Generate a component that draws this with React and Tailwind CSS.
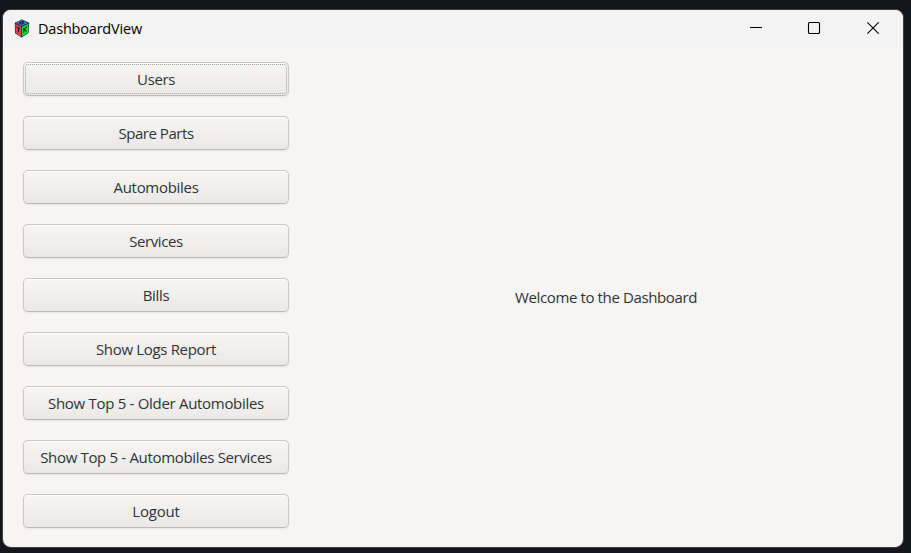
const items = [
  { label: 'Users', focused: true, spacing: 'tracking-[-0.4px]' },
  { label: 'Spare Parts', spacing: 'tracking-[-0.45px]' },
  { label: 'Automobiles', spacing: 'tracking-[-0.3px]' },
  { label: 'Services', spacing: 'tracking-[-0.4px]' },
  { label: 'Bills', spacing: 'tracking-[-0.3px]' },
  { label: 'Show Logs Report', spacing: 'tracking-[-0.33px]' },
  { label: 'Show Top 5 - Older Automobiles', spacing: 'tracking-[-0.3px]' },
  { label: 'Show Top 5 - Automobiles Services', spacing: 'tracking-[-0.33px]' },
  { label: 'Logout', spacing: 'tracking-[-0.2px]' },
];

function GtkLogo() {
  return (
    <svg width="16" height="19" viewBox="0 0 16 19" className="shrink-0">
      <path d="M8 .4 15.2 3.8 14.5 14 7.7 18.5 1 14.2.8 3.8Z" fill="#24262c" />
      <path d="M8 1 14.3 3.9 7.5 7.1 1.5 4.1Z" fill="#3a6fcc" />
      <path d="M1.4 5 7.2 7.8v9.6L1.7 13.9Z" fill="#f23c40" />
      <path d="M8 7.8l6.6-3-.6 8.9L8 17.4Z" fill="#16d535" />
      <path d="M10 3 7.6 2.6 5.4 4 7.6 5.2 9.6 4.2 8.2 3.7M2.7 7.9 6 9.6M4.4 8.8v4.4M9.8 8.8v4.8M12.6 7.4 10.2 11l2.4 1.2" stroke="#14141c" strokeWidth="1" fill="none" />
    </svg>
  );
}

function NavButton({ label, focused, spacing }) {
  return (
    <button className="h-[34px] w-full shrink-0 rounded-[5px] border border-[#cdc7c2] border-b-[#bfb8b1] bg-linear-to-b from-[#f6f5f3] to-[#eae9e8] p-px shadow-[0_1px_2px_rgba(0,0,0,0.07),inset_0_1px_0_#ffffff]">
      <span className={`flex h-full items-center justify-center rounded-[3px] border border-dotted ${focused ? 'border-[#a0a2a1]' : 'border-transparent'}`}>
        <span className={`whitespace-nowrap ${spacing}`}>{label}</span>
      </span>
    </button>
  );
}

export default function App() {
  return (
    <div className="h-[553px] w-[911px] overflow-hidden bg-[#14151d] pl-[2px] pt-[9px] font-['Open_Sans','Noto_Sans',sans-serif] text-[15px] leading-5 text-[#2e3436]">
      <div className="flex h-[539px] w-[902px] flex-col overflow-hidden rounded-[9px] border border-[#3c3d40] bg-[#f6f5f3]">
        <header className="flex h-[37px] shrink-0 items-center bg-[#f3f3f3] pl-[11px] text-black">
          <GtkLogo />
          <h1 className="ml-[8px] pt-px text-[14.5px] tracking-[-0.2px]">DashboardView</h1>
          <svg width="130" height="14" viewBox="0 0 130 14" className="mb-px ml-auto mr-[23px] shrink-0" fill="none" stroke="#000" strokeWidth="1.1">
            <path d="M0 6.5h12" />
            <rect x="58.5" y="1.5" width="11" height="11" rx="1" />
            <path d="m117.4 1.4 11.2 11.2m0-11.2-11.2 11.2" />
          </svg>
        </header>
        <main className="flex min-h-0 flex-1">
          <nav className="flex w-[286px] shrink-0 flex-col gap-5 pl-5 pt-[15px]">
            {items.map((item) => (
              <NavButton key={item.label} {...item} />
            ))}
          </nav>
          <section className="ml-[20px] flex flex-1 items-center justify-center">
            <p className="tracking-[-0.38px]">Welcome to the Dashboard</p>
          </section>
        </main>
      </div>
    </div>
  );
}
